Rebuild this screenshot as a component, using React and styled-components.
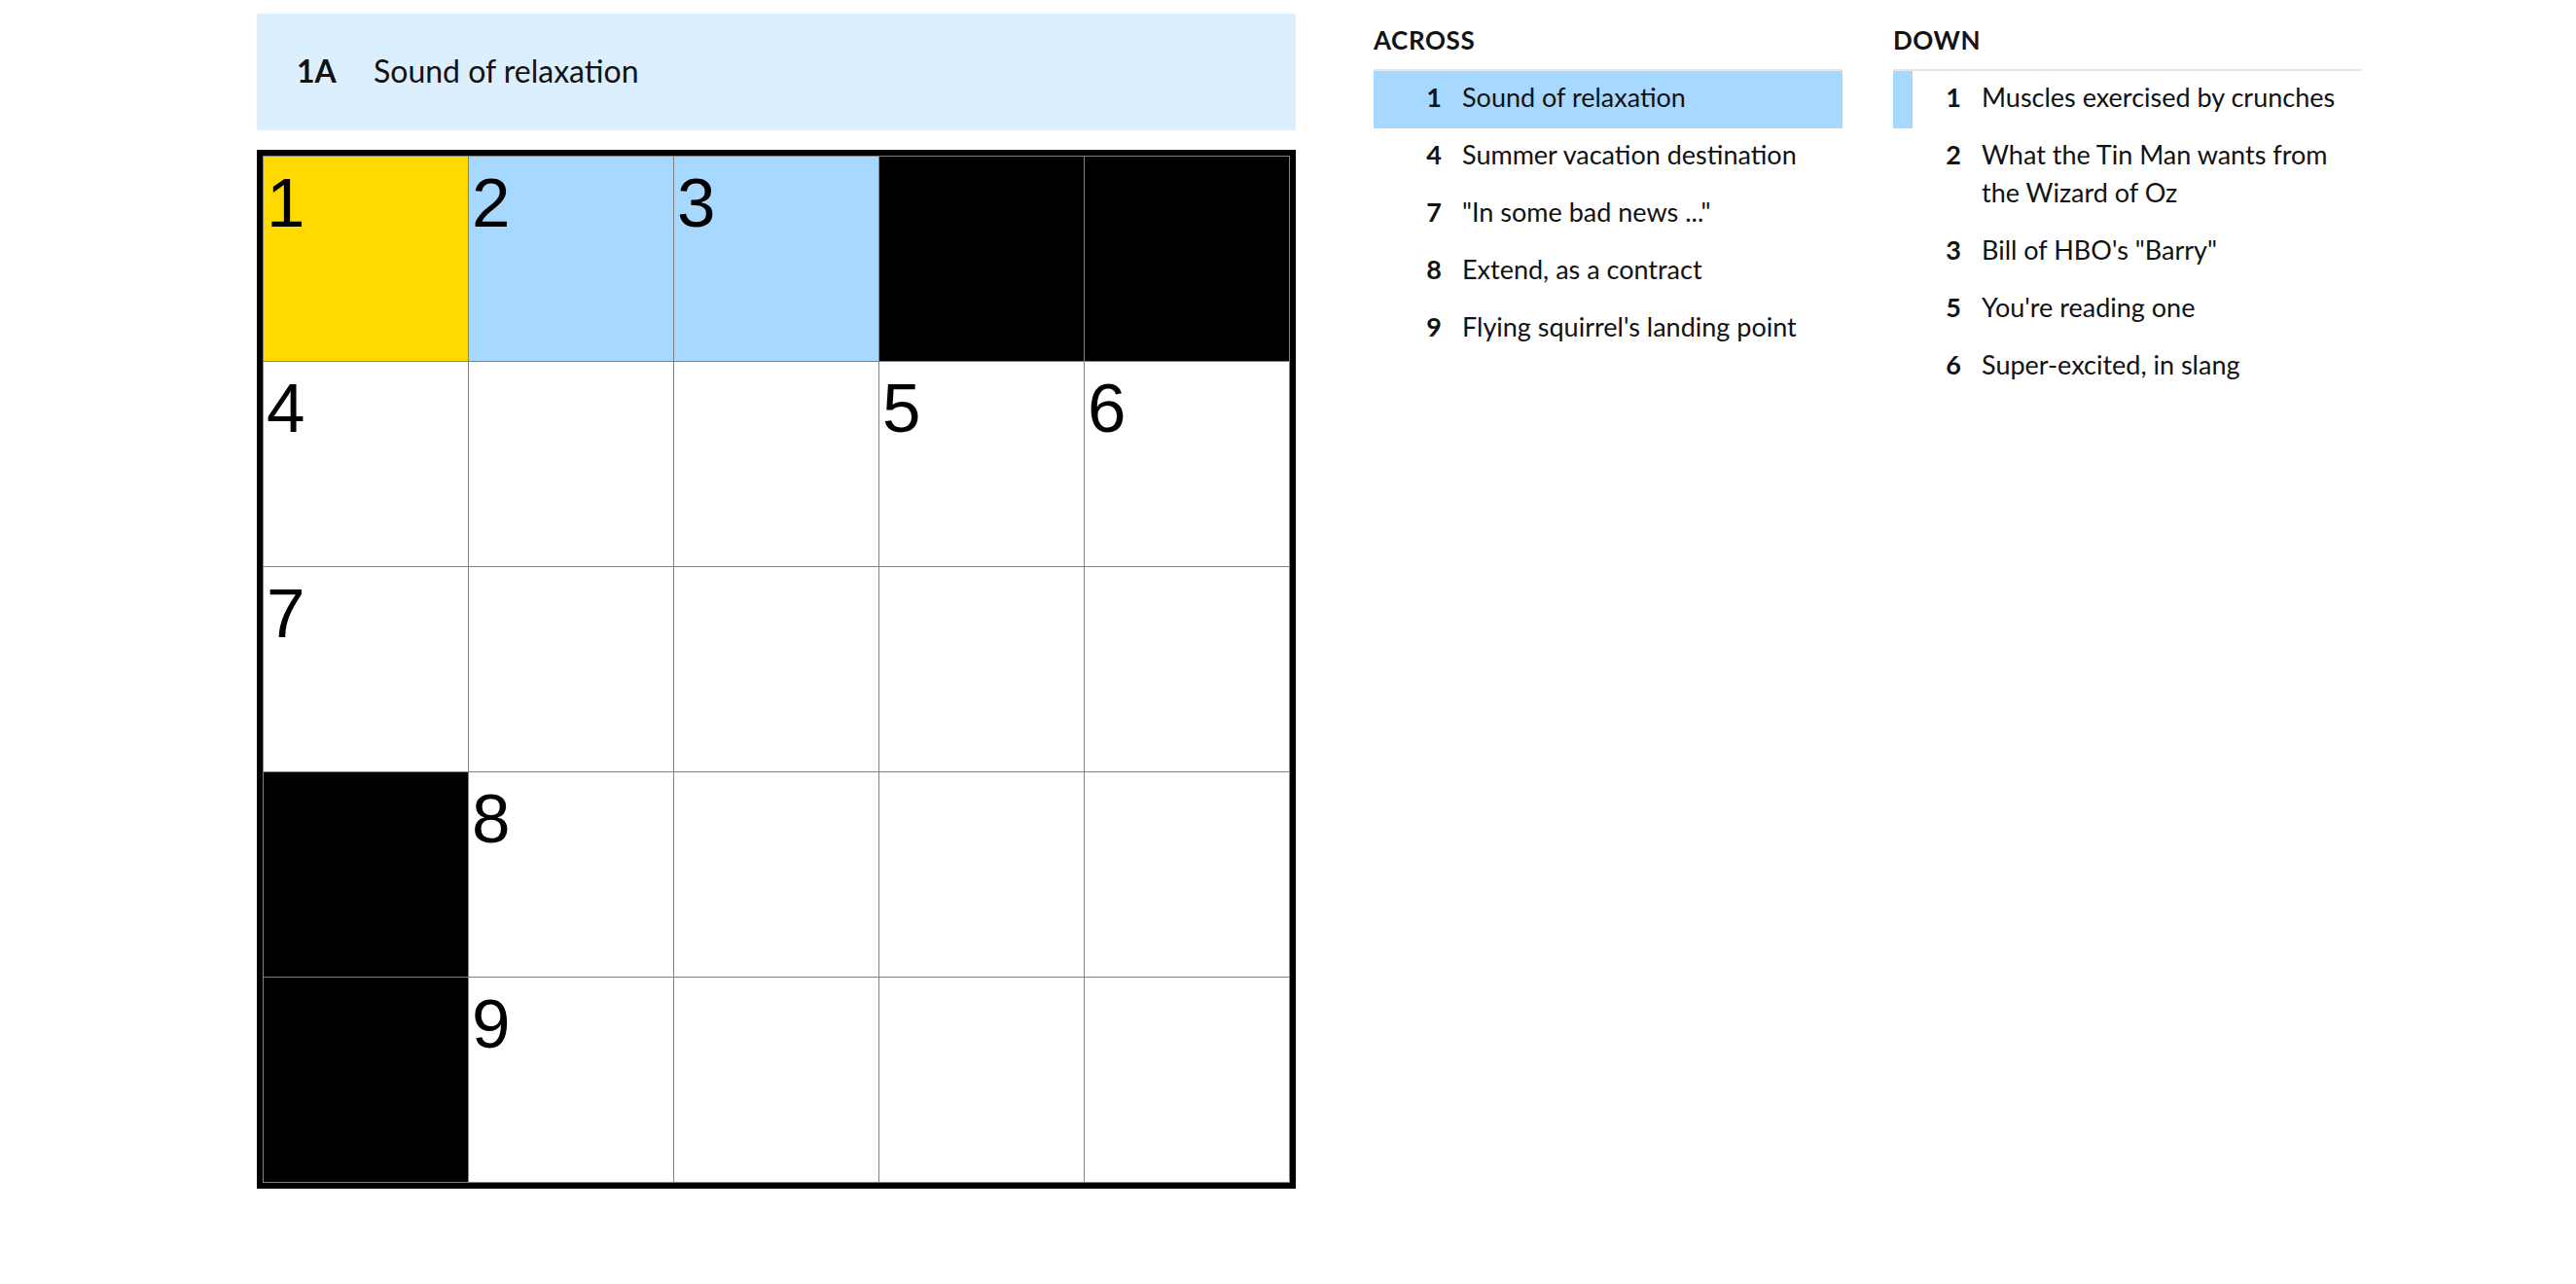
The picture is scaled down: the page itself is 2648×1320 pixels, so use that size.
import React from 'react';
import styled, { createGlobalStyle } from 'styled-components';

const GlobalStyle = createGlobalStyle`
    html, body {
        margin: 0;
        padding: 0;
        background: #ffffff;
    }
    body {
        font-family: Lato, "Liberation Sans", sans-serif;
        color: #121212;
    }
`;

// grid layout: null is a black square, number is the clue label
const CELLS = [
    [1, 2, 3, null, null],
    [4, '', '', 5, 6],
    [7, '', '', '', ''],
    [null, 8, '', '', ''],
    [null, 9, '', '', ''],
];

const ACROSS = [
    { num: 1, text: 'Sound of relaxation' },
    { num: 4, text: 'Summer vacation destination' },
    { num: 7, text: '"In some bad news ..."' },
    { num: 8, text: 'Extend, as a contract' },
    { num: 9, text: "Flying squirrel's landing point" },
];

const DOWN = [
    { num: 1, text: 'Muscles exercised by crunches' },
    { num: 2, text: 'What the Tin Man wants from the Wizard of Oz' },
    { num: 3, text: 'Bill of HBO\'s "Barry"' },
    { num: 5, text: "You're reading one" },
    { num: 6, text: 'Super-excited, in slang' },
];

const cellColor = (row, col, value) => {
    if (value === null) return '#000000';
    if (row === 0 && col === 0) return '#ffda00';
    if (row === 0) return '#a7d8ff';
    return '#ffffff';
};

const App = () => {
    return (
        <>
            <GlobalStyle />
            <Page>
                <Board>
                    <ClueBar>
                        <BarLabel>1A</BarLabel>
                        <BarText>Sound of relaxation</BarText>
                    </ClueBar>
                    <Grid>
                        {CELLS.map((row, r) =>
                            row.map((value, c) => (
                                <Cell key={`${r}-${c}`} $bg={cellColor(r, c, value)}>
                                    {typeof value === 'number' && <CellNum>{value}</CellNum>}
                                </Cell>
                            ))
                        )}
                    </Grid>
                </Board>
                <Lists>
                    <ClueColumn>
                        <ListTitle>Across</ListTitle>
                        <ClueList>
                            {ACROSS.map((clue) => (
                                <ClueItem key={clue.num} $active={clue.num === 1}>
                                    <ClueNum>{clue.num}</ClueNum>
                                    <ClueText>{clue.text}</ClueText>
                                </ClueItem>
                            ))}
                        </ClueList>
                    </ClueColumn>
                    <ClueColumn>
                        <ListTitle>Down</ListTitle>
                        <ClueList>
                            {DOWN.map((clue) => (
                                <ClueItem key={clue.num} $cross={clue.num === 1}>
                                    <ClueNum>{clue.num}</ClueNum>
                                    <ClueText>{clue.text}</ClueText>
                                </ClueItem>
                            ))}
                        </ClueList>
                    </ClueColumn>
                </Lists>
            </Page>
        </>
    );
};

const Page = styled.div`
    display: flex;
    align-items: flex-start;
    gap: 80px;
    padding: 14px 0 0 264px;
`;

const Board = styled.div`
    display: flex;
    flex-direction: column;
    gap: 20px;
    width: 1068px;
`;

const ClueBar = styled.div`
    display: flex;
    align-items: center;
    height: 120px;
    padding: 0 0 3px 41px;
    box-sizing: border-box;
    background: #dcefff;
    font-size: 32px;
`;

const BarLabel = styled.span`
    width: 79px;
    font-weight: 700;
`;

const BarText = styled.span`
    font-weight: 400;
`;

const Grid = styled.div`
    display: grid;
    grid-template-columns: repeat(5, 210px);
    grid-auto-rows: 210px;
    gap: 1px;
    padding: 1px;
    background: #828282;
    border: 6px solid #000000;
`;

const Cell = styled.div`
    position: relative;
    background: ${(p) => p.$bg};
`;

const CellNum = styled.span`
    position: absolute;
    top: 12px;
    left: 3px;
    font-family: "Liberation Sans", Arial, sans-serif;
    font-size: 71px;
    line-height: 1;
    color: #000000;
`;

const Lists = styled.div`
    display: flex;
    gap: 52px;
`;

const ClueColumn = styled.section`
    width: 482px;
`;

const ListTitle = styled.h3`
    margin: 12px 0 0;
    padding-bottom: 15px;
    border-bottom: 2px solid #e6e6e6;
    font-size: 26px;
    line-height: 30px;
    letter-spacing: 0.6px;
    font-weight: 700;
    text-transform: uppercase;
`;

const ClueList = styled.ol`
    list-style: none;
    margin: 0;
    padding: 0;
`;

const ClueItem = styled.li`
    display: flex;
    align-items: flex-start;
    padding: 7px 0 13px;
    border-left: 20px solid ${(p) => (p.$cross || p.$active ? '#a7d8ff' : 'transparent')};
    background: ${(p) => (p.$active ? '#a7d8ff' : 'transparent')};
    font-size: 27px;
    line-height: 39px;
`;

const ClueNum = styled.span`
    flex: none;
    width: 50px;
    margin-right: 21px;
    text-align: right;
    font-weight: 700;
`;

const ClueText = styled.span`
    padding-right: 18px;
`;

export default App;
